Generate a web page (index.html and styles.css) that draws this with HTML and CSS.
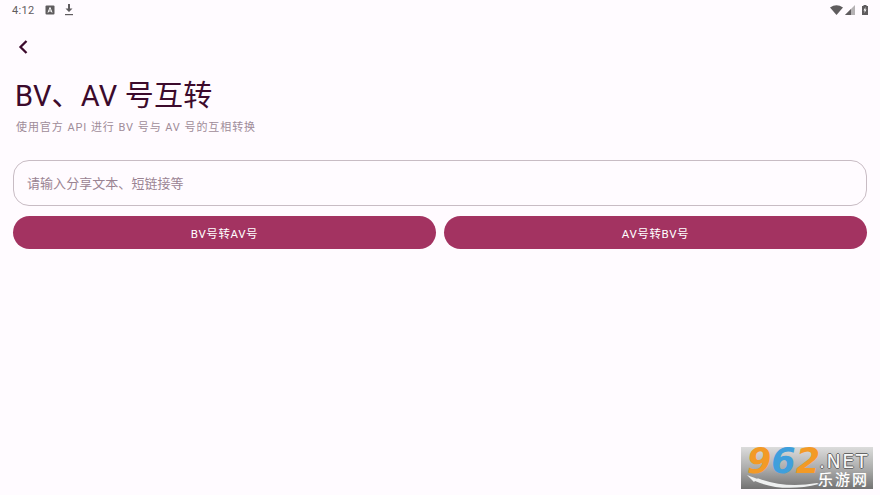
FILE: index.html
```html
<!DOCTYPE html>
<html lang="zh-CN">
<head>
    <meta charset="UTF-8">
    <meta name="viewport" content="width=device-width, initial-scale=1.0">
    <title>BV、AV 号互转</title>
    <link rel="stylesheet" href="styles.css">
</head>
<body>
    <div class="status-bar">
        <div class="status-left">
            <span class="clock">4:12</span>
            <svg class="status-icon" width="10" height="10" viewBox="0 0 10 10">
                <rect x="0.5" y="0.5" width="9" height="9" rx="1" fill="#5f5c5e"/>
                <path d="M3 7.5 5 2.5 7 7.5M3.8 6h2.4" fill="none" stroke="#fff" stroke-width="1"/>
            </svg>
            <svg class="status-icon download" width="10" height="12" viewBox="0 0 10 12">
                <path d="M4 0h2v4.5h2.5L5 8 1.500 4.500H4z" fill="#5f5c5e"/>
                <rect x="1" y="10" width="8" height="1.200" fill="#5f5c5e"/>
            </svg>
        </div>
        <div class="status-right">
            <svg width="13" height="10" viewBox="0 0 13 10">
                <path d="M0 2.500Q6.500-2 13 2.500L6.500 10z" fill="#5f5c5e"/>
            </svg>
            <svg width="10" height="10" viewBox="0 0 10 10">
                <path d="M0 10 10 0v10z" fill="#b5b2b4"/>
                <path d="M0 10 6 4v6z" fill="#5f5c5e"/>
            </svg>
            <svg class="battery" width="6" height="10" viewBox="0 0 6 10">
                <path d="M1.500 0h3v1H6v9H0V1h1.500z" fill="#5f5c5e"/>
                <path d="M3.500 2 1.500 5.500h1.200L2.500 8l2-3.500H3.300z" fill="#fff"/>
            </svg>
        </div>
    </div>

    <div class="top-bar">
        <svg width="12" height="16" viewBox="0 0 12 16">
            <path d="M9.500 2 3.500 8l6 6" fill="none" stroke="#3c0a2c" stroke-width="2.300"/>
        </svg>
    </div>

    <div class="heading">
        <h1>BV、AV 号互转</h1>
        <p>使用官方 API 进行 BV 号与 AV 号的互相转换</p>
    </div>

    <div class="form">
        <input class="share-input" type="text" placeholder="请输入分享文本、短链接等">
        <div class="actions">
            <button>BV号转AV号</button>
            <button>AV号转BV号</button>
        </div>
    </div>

    <div class="watermark">
        <svg class="swoosh" width="72" height="14" viewBox="0 0 72 14">
            <path d="M0 0Q8 3 11 4L10 3Q38 14 70 8L72 9Q36 18 8 6L7 7z" fill="#eef0f0"/>
        </svg>
        <span class="wm-num"><span class="orange">9</span><span class="blue">6</span><span class="orange">2</span></span>
        <span class="wm-net">.NET</span>
        <span class="wm-cn">乐游网</span>
    </div>
</body>
</html>
```

FILE: styles.css
```css
* {
    box-sizing: border-box;
}
body {
    margin: 0;
    height: 495px;
    overflow: hidden;
    background-color: #fffbff;
    font-family: Roboto, "Noto Sans CJK SC", sans-serif;
    color: #3c0a2c;
    position: relative;
}
.status-bar {
    height: 20px;
    padding: 0 12px 0 12px;
    display: flex;
    align-items: center;
    justify-content: space-between;
    color: #5f5c5e;
}
.status-left {
    display: flex;
    align-items: center;
}
.clock {
    font-size: 11px;
    letter-spacing: 0.3px;
    margin-right: 11px;
}
.status-icon.download {
    margin-left: 9px;
}
.status-right {
    display: flex;
    align-items: center;
    gap: 2px;
}
.battery {
    margin-left: 5px;
}
.top-bar {
    height: 55px;
    padding: 0 0 2px 17px;
    display: flex;
    align-items: center;
}
.heading {
    padding: 0 15px;
}
h1 {
    margin: 0;
    font-size: 29px;
    line-height: 42px;
    font-weight: 400;
    letter-spacing: 0.2px;
}
p {
    margin: 2px 0 0 1px;
    font-size: 11px;
    line-height: 18px;
    letter-spacing: 0.93px;
    color: #a08c99;
}
.form {
    margin-top: 23px;
    padding: 0 13px;
}
.share-input {
    display: block;
    width: 100%;
    height: 46px;
    padding: 0 13px;
    background: transparent;
    border: 1px solid #c8bcc4;
    border-radius: 16px;
    font-family: inherit;
    font-size: 13px;
    letter-spacing: 0.05px;
    outline: none;
}
.share-input::placeholder {
    color: #9a8392;
    opacity: 1;
}
.actions {
    margin-top: 10px;
    display: flex;
    gap: 8px;
}
.actions button {
    flex: 1;
    height: 33px;
    border: none;
    border-radius: 17px;
    background-color: #a33361;
    color: #fff;
    font-family: inherit;
    font-size: 11.5px;
    font-weight: 400;
    letter-spacing: 0.6px;
}
.watermark {
    position: absolute;
    left: 741px;
    top: 447px;
    width: 132px;
    height: 42px;
    background: linear-gradient(to bottom, #dcdcdc 0%, #a8a8a8 55%, #727272 100%);
}
.wm-num {
    position: absolute;
    left: 6px;
    top: 2px;
    font-family: "DejaVu Sans", sans-serif;
    font-size: 35px;
    line-height: 25px;
    font-weight: 700;
    font-style: italic;
}
.orange {
    color: #f39a26;
}
.blue {
    color: #3f9fdc;
}
.wm-net {
    position: absolute;
    left: 78px;
    top: 5px;
    font-family: "DejaVu Sans", sans-serif;
    font-size: 19px;
    line-height: 18px;
    letter-spacing: 1.5px;
    color: #f8f8f8;
    text-shadow: 1px 0 0 #666, -1px 0 0 #666, 0 1px 0 #666, 0 -1px 0 #666;
}
.wm-cn {
    position: absolute;
    left: 77px;
    top: 24px;
    font-size: 15px;
    line-height: 18px;
    font-weight: 500;
    letter-spacing: 2px;
    color: #fff;
}
.swoosh {
    position: absolute;
    left: 6px;
    top: 28px;
}
```
